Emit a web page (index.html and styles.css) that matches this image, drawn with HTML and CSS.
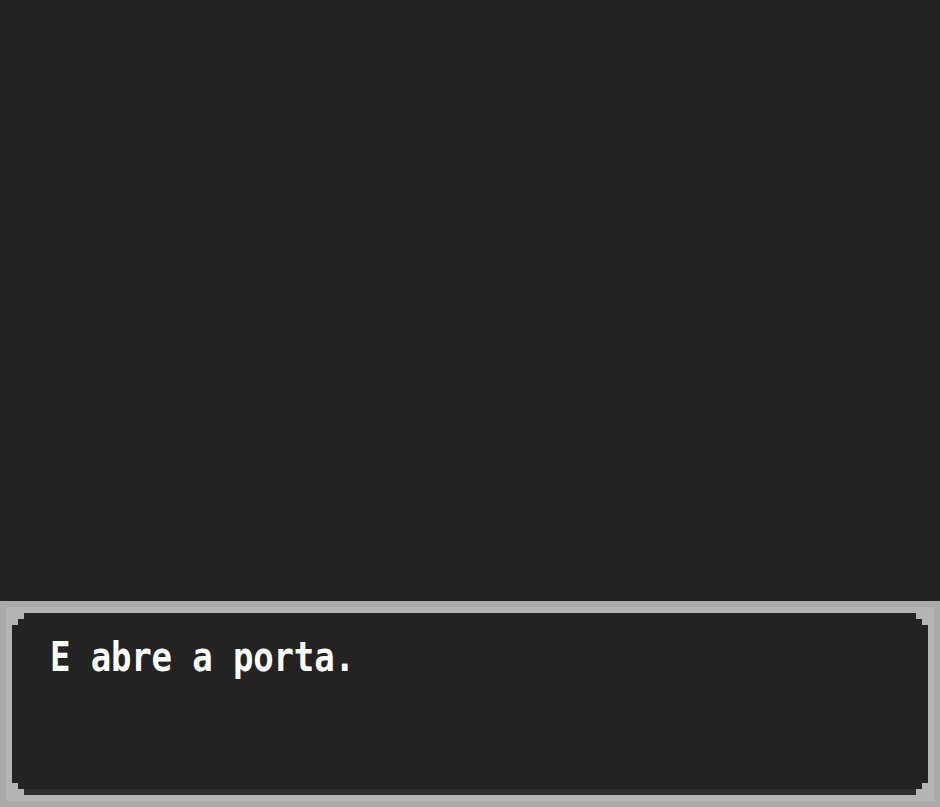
FILE: index.html
```html
<!DOCTYPE html>
<html lang="pt">
<head>
  <meta charset="UTF-8">
  <title>Cena</title>
  <link rel="stylesheet" href="styles.css">
</head>
<body>

  <div class="game">
    <!-- Scene area (empty) -->
    <div class="scene"></div>

    <!-- Dialogue box -->
    <div class="dialog">
      <div class="dialog-frame">
        <div class="dialog-panel">
          <p class="dialog-text">E abre a porta.</p>
        </div>
      </div>
    </div>
  </div>

</body>
</html>
```

FILE: styles.css
```css
html, body {
  margin: 0;
  height: 100%;
  background-color: #232323;
}

.game {
  display: flex;
  flex-direction: column;
  width: 940px;
  height: 807px;
  overflow: hidden;
}

.scene {
  flex: 1;
}

/* Dialogue box */
.dialog {
  height: 206px;
  box-sizing: border-box;
  padding: 6px;
  background-color: #aaaaaa;
}

.dialog-frame {
  height: 100%;
  box-sizing: border-box;
  padding: 6px;
  background-color: #b4b4b4;
}

.dialog-panel {
  height: 100%;
  box-sizing: border-box;
  padding: 26px 38px 0;
  background-color: #232323;
  box-shadow: inset 0 -6px 0 #2d2d2d;
  /* pixel stepped corners */
  clip-path: polygon(
    12px 0, calc(100% - 12px) 0,
    calc(100% - 12px) 6px, calc(100% - 6px) 6px,
    calc(100% - 6px) 12px, 100% 12px,
    100% calc(100% - 12px), calc(100% - 6px) calc(100% - 12px),
    calc(100% - 6px) calc(100% - 6px), calc(100% - 12px) calc(100% - 6px),
    calc(100% - 12px) 100%, 12px 100%,
    12px calc(100% - 6px), 6px calc(100% - 6px),
    6px calc(100% - 12px), 0 calc(100% - 12px),
    0 12px, 6px 12px,
    6px 6px, 12px 6px
  );
}

.dialog-text {
  margin: 0;
  font-family: "DejaVu Sans Mono", "Liberation Mono", monospace;
  font-weight: bold;
  font-size: 34px;
  line-height: 40px;
  letter-spacing: -0.15px;
  color: #ffffff;
  transform: scaleY(1.2);
  transform-origin: 0 31.75px;
}
```
